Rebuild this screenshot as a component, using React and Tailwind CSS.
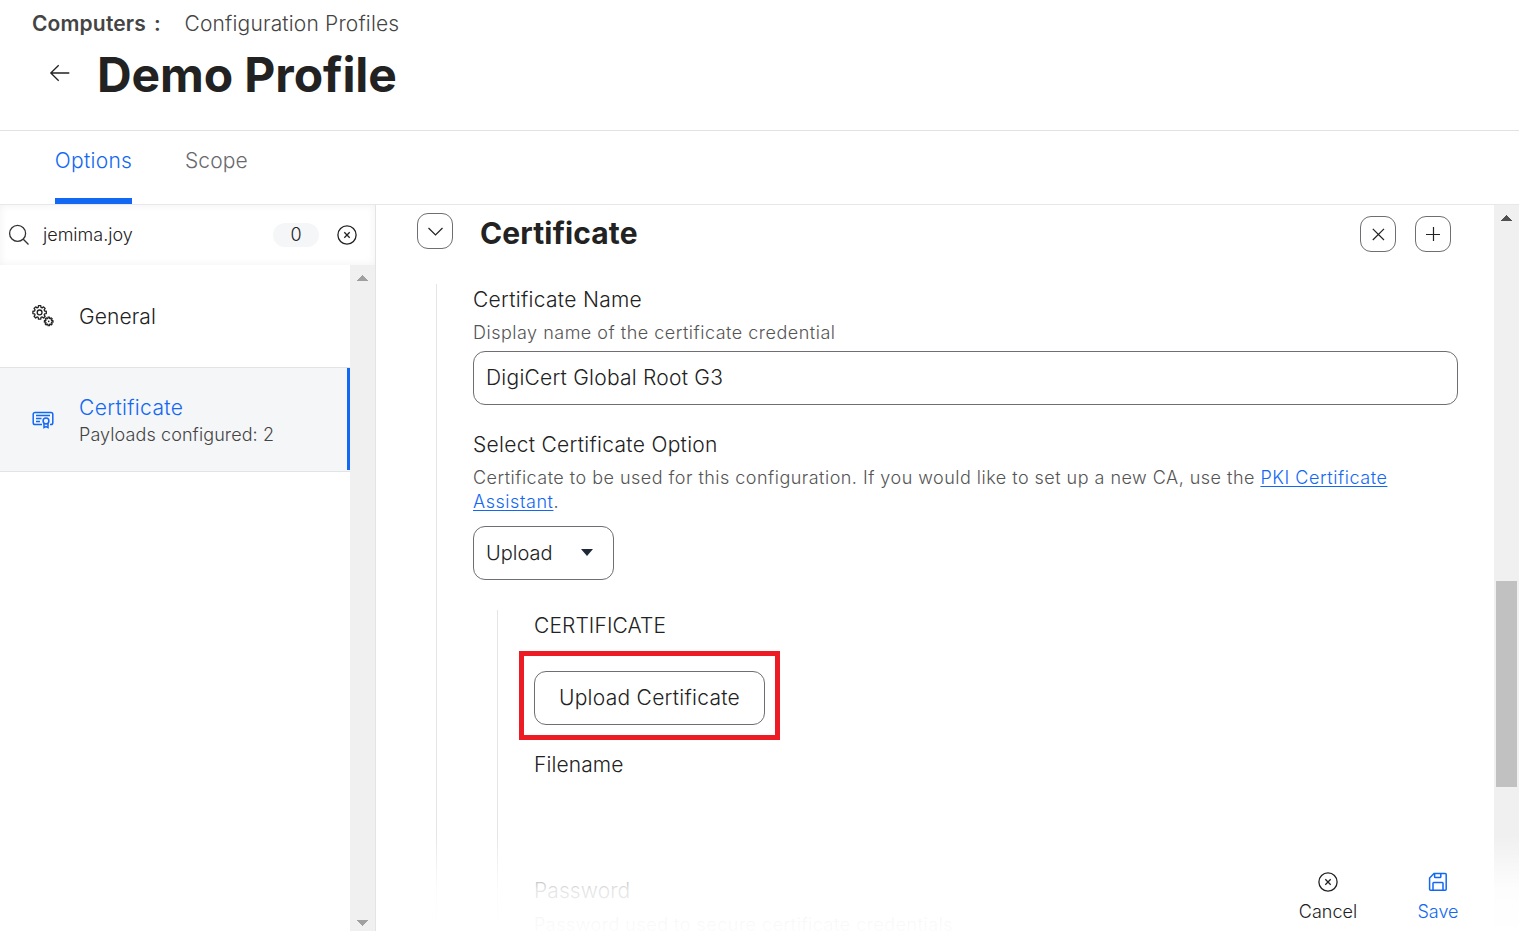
import React from 'react';

const ScrollArrow = ({ direction, className }) => (
  <svg width="11" height="6" viewBox="0 0 11 6" className={className} fill="currentColor" shapeRendering="crispEdges">
    <path d={direction === 'up' ? 'M5.5 0L11 6H0z' : 'M0 0h11L5.5 6z'} />
  </svg>
);

const CircleX = ({ className }) => (
  <svg width="22" height="22" viewBox="0 0 22 22" className={className} fill="none" stroke="currentColor" strokeWidth="1.3">
    <circle cx="11" cy="11" r="9.1" />
    <path d="M8.3 8.3l5.4 5.4M13.7 8.3l-5.4 5.4" />
  </svg>
);

const SearchIcon = () => (
  <svg width="22" height="22" viewBox="0 0 22 22" fill="none" stroke="#333" strokeWidth="1.3">
    <circle cx="9.6" cy="9.4" r="8" />
    <path d="M15.3 15.3l5.2 5.2" />
  </svg>
);

// outline of a cog with eight teeth
const gearPath = (cx, cy, outer, inner) => {
  const corners = [[-0.27, inner], [-0.17, outer], [0.17, outer], [0.27, inner]];
  const points = [];
  for (let i = 0; i < 8; i++) {
    corners.forEach(([offset, r]) => {
      const a = (i * Math.PI) / 4 + offset;
      points.push(`${(cx + r * Math.cos(a)).toFixed(2)} ${(cy + r * Math.sin(a)).toFixed(2)}`);
    });
  }
  return `M${points.join('L')}z`;
};

const GearsIcon = () => (
  <svg width="24" height="24" viewBox="0 0 24 24" fill="none" stroke="#222" strokeWidth="1.3" strokeLinejoin="round">
    <path d={gearPath(8.6, 8.4, 6.8, 5.2)} />
    <circle cx="8.6" cy="8.4" r="2.4" />
    <path d={gearPath(17.7, 17.4, 4.4, 3)} strokeWidth="1.2" />
    <circle cx="17.7" cy="17.4" r="0.8" fill="#222" stroke="none" />
  </svg>
);

const CertificateIcon = () => (
  <svg width="22" height="18" viewBox="0 0 22 18" fill="none" stroke="#1268f3" strokeWidth="1.5">
    <path d="M10 13.5H3A1.8 1.8 0 0 1 1.2 11.7V3.3A1.8 1.8 0 0 1 3 1.5h16a1.8 1.8 0 0 1 1.8 1.8v8.4a1.8 1.8 0 0 1-1.8 1.8h-1" />
    <path d="M4 4.6h14M4 7.6h5.5M4 10.5h4" />
    <circle cx="14" cy="10" r="2.9" />
    <path d="M12 12.4v4.2l2-1 2 1v-4.2" />
  </svg>
);

const SaveIcon = () => (
  <svg width="20" height="20" viewBox="0 0 20 20" fill="none" stroke="#1268f3" strokeWidth="1.5">
    <path d="M6 1.5h11.2a1 1 0 0 1 1 1v14.8a1 1 0 0 1-1 1H2.6a1 1 0 0 1-1-1V6z" />
    <path d="M6.6 1.5v3.2a.8.8 0 0 0 .8.8h4.6a.8.8 0 0 0 .8-.8V1.5M5 18.3v-7a.8.8 0 0 1 .8-.8h8.4a.8.8 0 0 1 .8.8v7" />
  </svg>
);

const IconButton = ({ children }) => (
  <button className="flex h-9 w-9 items-center justify-center rounded-[11px] border border-[#6e6e73] bg-white">
    {children}
  </button>
);

const Header = () => (
  <header className="h-[131px] shrink-0 border-b border-[#e2e2e4]">
    <div className="flex h-[47px] items-center pl-8 text-[21px] text-[#444]">
      <span className="w-[152.5px] font-semibold tracking-[0.15px]">
        Computers<span className="ml-2">:</span>
      </span>
      <span className="font-light tracking-[0.17px]">Configuration Profiles</span>
    </div>
    <div className="flex h-[55px] items-center pl-[49px]">
      <svg width="22" height="18" viewBox="0 0 22 18" fill="none" stroke="#222" strokeWidth="1.3" className="-mt-1 mr-[26px]">
        <path d="M20.3 9H1.8M9.7 1.2L1.8 9l7.9 7.8" />
      </svg>
      <h1 className="text-[48px] leading-none font-bold tracking-[-0.1px] text-[#222]">Demo Profile</h1>
    </div>
  </header>
);

const Tabs = () => (
  <nav className="flex h-[74px] shrink-0 gap-[53px] border-b border-[#e8e8ea] pl-[55px] text-[21px] leading-[30px] font-light">
    <button className="flex h-[73px] w-[77px] justify-center border-b-[6px] border-[#1268f3] pt-[15px] tracking-[0.3px] whitespace-nowrap text-[#1268f3]">
      Options
    </button>
    <button className="flex h-[73px] pt-[15px] tracking-[0.1px] text-[#6a6a6e]">Scope</button>
  </nav>
);

const Sidebar = () => (
  <aside className="flex w-[376px] shrink-0 flex-col border-r border-[#e4e4e6]">
    <div className="flex h-[60px] shrink-0 items-center pl-2 shadow-[inset_0_0_8px_rgba(0,0,0,0.06)]">
      <SearchIcon />
      <span className="ml-[13px] w-[230px] pb-0.5 text-[18px] font-light text-[#222]">jemima.joy</span>
      <span className="flex h-6 w-[46px] items-center justify-center rounded-full bg-[#f5f6f8] pb-px text-[18px] font-light text-[#222]">0</span>
      <CircleX className="ml-[17px] text-[#222]" />
    </div>
    <div className="flex min-h-0 flex-1">
      <ul className="w-[350px]">
        <li className="flex h-[103px] items-center border-b border-[#e2e3e5] pl-[31px] text-[21px] font-light text-[#222]">
          <GearsIcon />
          <span className="ml-6 pt-0.5 tracking-[0.1px]">General</span>
        </li>
        <li className="h-[104px] border-b border-[#e2e3e5] bg-[#f5f6f8]">
          <div className="flex h-[102px] items-center border-r-[3px] border-[#1268f3] pl-8">
            <span className="pt-0.5">
              <CertificateIcon />
            </span>
            <div className="ml-[25px] pt-1 font-light">
              <p className="text-[21px] leading-[28px] tracking-[0.35px] text-[#1268f3]">Certificate</p>
              <p className="text-[18px] leading-[26px] tracking-[0.1px] text-[#444]">Payloads configured: 2</p>
            </div>
          </div>
        </li>
      </ul>
      <div className="flex w-[25px] flex-col items-center justify-between bg-[#f0f0f0] pt-[10px] pb-[5px] text-[#a0a0a0]">
        <ScrollArrow direction="up" />
        <ScrollArrow direction="down" />
      </div>
    </div>
  </aside>
);

const UploadSection = () => (
  <div className="mt-[30px] ml-6 h-[330px] border-l border-[#e5e5e7] pl-9 text-[21px] font-light tracking-[0.1px] text-[#222]">
    <p className="h-[61px] leading-[32px]">CERTIFICATE</p>
    <div className="relative w-[231px]">
      <button className="h-[54px] w-full rounded-[12px] border border-[#6e6e73] font-light tracking-[0.28px]">Upload Certificate</button>
      <div className="pointer-events-none absolute -inset-x-[15px] -top-5 -bottom-[15px] border-[5px] border-[#ed1c24]" />
    </div>
    <p className="mt-6 leading-8">Filename</p>
    <p className="mt-[94px] leading-8">Password</p>
    <p className="mt-1 text-[18px] leading-7 tracking-[0.5px] text-[#555]">Password used to secure certificate credentials</p>
  </div>
);

const CertificateForm = () => (
  <div className="mt-[30px] ml-[60px] w-[1022px] border-l border-[#e5e5e7]">
    <div className="pl-9 font-light tracking-[0.3px] text-[#222]">
      <p className="text-[21px] leading-8">Certificate Name</p>
      <p className="mt-[3px] text-[18px] leading-7 tracking-[0.5px] text-[#555]">Display name of the certificate credential</p>
      <input
        className="mt-1 block h-[54px] w-[985px] rounded-[12px] border border-[#6e6e73] px-3 pb-0.5 text-[21px] font-light tracking-[0.24px] outline-none"
        defaultValue="DigiCert Global Root G3"
      />
      <p className="mt-6 text-[21px] leading-8">Select Certificate Option</p>
      <p className="mt-[5px] text-[18px] leading-6 tracking-[0.475px] text-[#555]">
        Certificate to be used for this configuration. If you would like to set up a new CA, use the{' '}
        <a className="tracking-[0.55px] text-[#1268f3] underline underline-offset-2">PKI Certificate<br />Assistant</a>.
      </p>
      <button className="mt-3 flex h-[54px] w-[141px] items-center rounded-[12px] border border-[#6e6e73] pl-3 text-[20px] font-light tracking-normal">
        Upload
        <svg width="12" height="7" viewBox="0 0 12 7" fill="#1f2937" className="-mt-0.5 ml-7">
          <path d="M0 0h12L6 7z" />
        </svg>
      </button>
    </div>
    <div className="pl-9">
      <UploadSection />
    </div>
  </div>
);

const FooterActions = () => (
  <div className="absolute inset-x-0 bottom-0 flex h-[96px] justify-end bg-linear-to-b from-white/0 via-white/88 via-57% to-white/98 pr-[59px] text-[18px] font-light">
    <button className="mt-9 flex w-[60px] flex-col items-center text-[#222]">
      <CircleX />
      <span className="mt-[5px]">Cancel</span>
    </button>
    <button className="mt-[37px] ml-[58px] flex w-[44px] flex-col items-center text-[#1268f3]">
      <SaveIcon />
      <span className="mt-1.5">Save</span>
    </button>
  </div>
);

const App = () => (
  <div className="flex h-[931px] w-[1519px] flex-col overflow-hidden bg-white font-[Inter,sans-serif]">
    <Header />
    <Tabs />
    <div className="flex min-h-0 flex-1">
      <Sidebar />
      <main className="relative flex min-w-0 flex-1 overflow-hidden">
        <section className="min-w-0 flex-1">
          <div className="flex pt-2 pl-[41px]">
            <IconButton>
              <svg width="17" height="9" viewBox="0 0 17 9" fill="none" stroke="#222" strokeWidth="1.2">
                <path d="M1.5 1l7 7 7-7" />
              </svg>
            </IconButton>
            <h2 className="ml-[27px] h-[41px] flex-1 text-[30px] leading-[41px] font-bold tracking-[0.13px] text-[#222]">Certificate</h2>
            <div className="mt-[3px] mr-[43px] flex gap-[19px]">
              <IconButton>
                <svg width="14" height="14" viewBox="0 0 14 14" fill="none" stroke="#222" strokeWidth="1.2">
                  <path d="M1.8 1.8l11.2 11.2M13 1.8L1.8 13" />
                </svg>
              </IconButton>
              <IconButton>
                <svg width="14" height="14" viewBox="0 0 14 14" fill="none" stroke="#222" strokeWidth="1.2">
                  <path d="M0 7.5h14M7.5 0v14" />
                </svg>
              </IconButton>
            </div>
          </div>
          <CertificateForm />
        </section>
        <div className="flex w-[25px] flex-col items-center bg-[#f0f0f0] pt-[10px]">
          <ScrollArrow direction="up" className="text-[#505050]" />
          <div className="mt-[360px] h-[206px] w-[21px] bg-[#c1c1c1]" />
        </div>
        <FooterActions />
      </main>
    </div>
  </div>
);

export default App;
